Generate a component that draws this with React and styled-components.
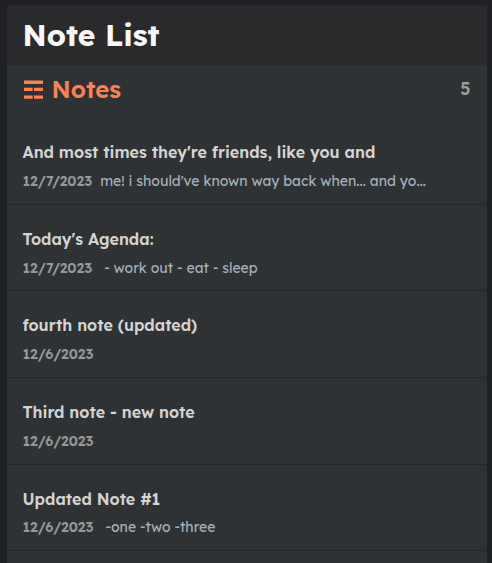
import React from 'react';
import styled, { createGlobalStyle } from 'styled-components';

const GlobalStyle = createGlobalStyle`
  * { box-sizing: border-box; }
  html, body { margin: 0; height: 563px; overflow: hidden; background: #202124; }
  body { font-family: Lexend, Inter, sans-serif; }
`;

const Panel = styled.main`
  height: 558px;
  margin: 5px 5px 0 7px;
  overflow: hidden;
  background: #2e3235;
`;

const Header = styled.header`
  height: 60px;
  padding: 0 15.5px;
  background: #292a2b;
`;

const AppTitle = styled.h1`
  margin: 0;
  font-size: 30px;
  line-height: 60px;
  font-weight: 700;
  color: #f8f8fa;
`;

const SectionBar = styled.div`
  display: flex;
  align-items: center;
  height: 49px;
  margin-bottom: 18px;
  padding: 0 16.5px 0 16px;
`;

const SectionIcon = styled.svg`
  width: 20px;
  height: 19px;
  margin-right: 8.5px;
  fill: #fc8254;
`;

const SectionTitle = styled.h2`
  margin: 0;
  font-size: 24px;
  line-height: 48px;
  font-weight: 600;
  transform: translateY(-1px);
  color: #fc8254;
`;

const Count = styled.span`
  margin-left: auto;
  padding-bottom: 3px;
  font-size: 17.5px;
  line-height: 44px;
  font-weight: 600;
  color: #9b9b9b;
`;

const Note = styled.article`
  height: 86.6px;
  padding: 24px 15.5px 0;
  border-bottom: 1px solid #25282a;

  &:first-child {
    height: 72.8px;
    padding-top: 10px;
  }
`;

const NoteTitle = styled.h3`
  margin: 0;
  font-size: 16px;
  line-height: 20px;
  font-weight: 600;
  white-space: nowrap;
  color: #d6d4d3;
`;

const Details = styled.div`
  display: flex;
  gap: ${({ $gap }) => $gap}px;
  margin-top: 8.8px;
  font-size: 14px;
  line-height: 20px;
  white-space: nowrap;
`;

const NoteDate = styled.time`
  font-weight: 600;
  color: #989898;
`;

const Preview = styled.span`
  font-weight: 400;
  color: #a5afba;
`;

const notes = [
  { title: "And most times they're friends, like you and", date: '12/7/2023', preview: "me! i should've known way back when... and yo...", gap: 8 },
  { title: "Today's Agenda:", date: '12/7/2023', preview: '- work out - eat - sleep', gap: 12 },
  { title: 'fourth note (updated)', date: '12/6/2023' },
  { title: 'Third note - new note', date: '12/6/2023' },
  { title: 'Updated Note #1', date: '12/6/2023', preview: '-one -two -three', gap: 12 },
];

export default function App() {
  return (
    <>
      <GlobalStyle />
      <Panel>
        <Header><AppTitle>Note List</AppTitle></Header>
        <SectionBar>
          <SectionIcon viewBox="0 0 20 19" aria-hidden="true">
            <path d="M1 0.6h19v3.4H1zM1 7.8h8.6v3.3H1zM11 7.8h9v3.3h-9zM1 15.4h8.6v3.4H1zM11 15.4h9v3.4h-9z" />
          </SectionIcon>
          <SectionTitle>Notes</SectionTitle>
          <Count>5</Count>
        </SectionBar>
        <section>
          {notes.map((n) => (
            <Note key={n.title}>
              <NoteTitle>{n.title}</NoteTitle>
              <Details $gap={n.gap || 0}>
                <NoteDate>{n.date}</NoteDate>
                {n.preview && <Preview>{n.preview}</Preview>}
              </Details>
            </Note>
          ))}
        </section>
      </Panel>
    </>
  );
}
